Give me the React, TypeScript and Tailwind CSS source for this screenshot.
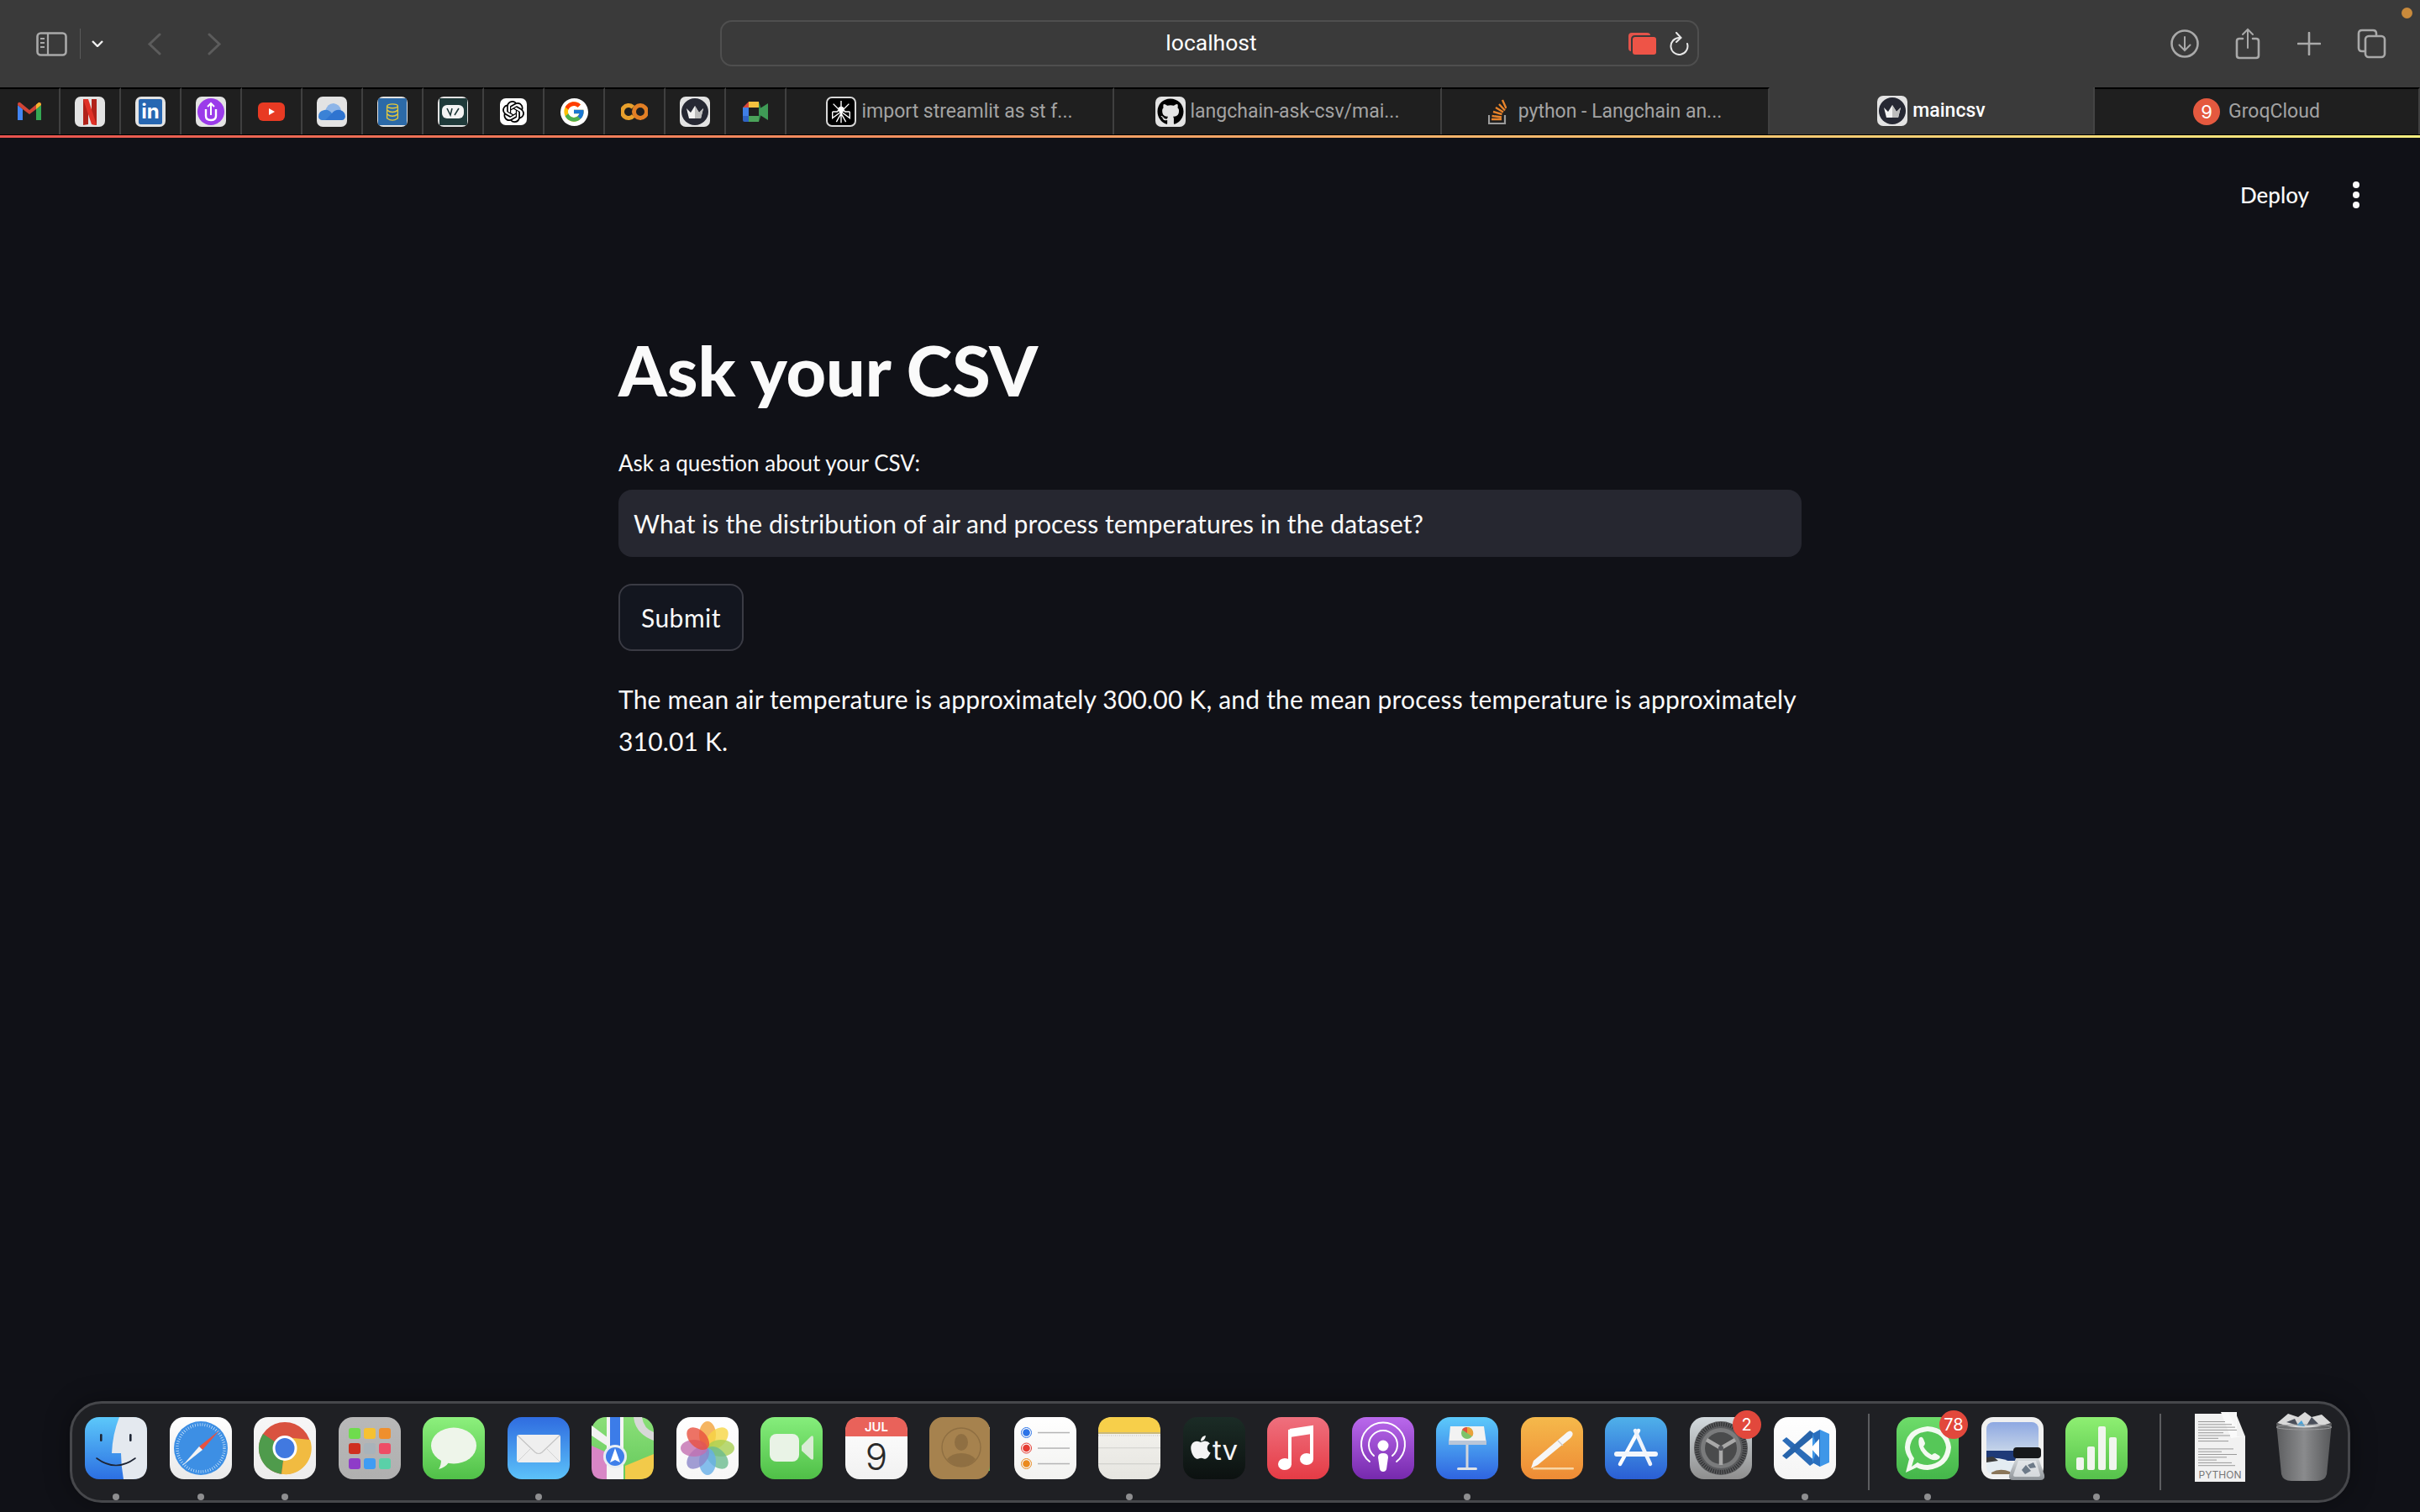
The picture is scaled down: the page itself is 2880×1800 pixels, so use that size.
import type { ReactNode } from 'react';
import { SiOpenai } from 'react-icons/si';
import { FcGoogle } from 'react-icons/fc';
import { FaGithub } from 'react-icons/fa';

const APPLE =
  'M318.7 268.7c-.2-36.7 16.4-64.4 50-84.8-18.8-26.9-47.2-41.7-84.7-44.6-35.5-2.8-74.3 20.7-88.5 20.7-15 0-49.4-19.7-76.4-19.7C63.3 141.2 4 184.8 4 273.5q0 39.3 14.4 81.2c12.8 36.7 59 126.7 107.2 125.2 25.2-.6 43-17.9 75.8-17.9 31.8 0 48.3 17.9 76.4 17.9 48.6-.7 90.4-82.5 102.6-119.3-65.2-30.7-61.7-90-61.7-91.9zm-56.6-164.2c27.3-32.4 24.8-61.9 24-72.5-24.1 1.4-52 16.4-67.9 34.9-17.5 19.8-27.8 44.3-25.6 71.9 26.1 2 49.9-11.4 69.5-34.3z';

// shared tile for the dock icons, 74x74 with a vertical gradient
function Tile({ id, from, to, children }: { id: string; from: string; to: string; children?: ReactNode }) {
  return (
    <svg viewBox="0 0 74 74" className="w-[74px] h-[74px] block">
      <defs>
        <linearGradient id={id} x1="0" y1="0" x2="0" y2="1">
          <stop offset="0" stopColor={from} />
          <stop offset="1" stopColor={to} />
        </linearGradient>
      </defs>
      <rect width="74" height="74" rx="17" fill={`url(#${id})`} />
      {children}
    </svg>
  );
}

const Finder = (
  <Tile id="finder" from="#5cc8fa" to="#2c6fe2">
    <path d="M41 0H57Q74 0 74 17V57Q74 74 57 74H46Q43 58 43 43H32Q33 20 41 0Z" fill="#e4e9ef" />
    <rect x="18" y="20" width="2.6" height="9" rx="1.3" fill="#1d2433" />
    <rect x="53" y="20" width="2.6" height="9" rx="1.3" fill="#1d2433" />
    <path d="M14 49Q37 66 60 49" fill="none" stroke="#1d2433" strokeWidth="1.6" strokeLinecap="round" />
  </Tile>
);

const Safari = (
  <Tile id="safari" from="#ffffff" to="#e9e9e9">
    <circle cx="37" cy="37" r="32" fill="#3d8fe4" />
    <circle cx="37" cy="37" r="28" fill="none" stroke="#d8ebfb" strokeWidth="3.5" strokeDasharray="0.7 2.2" />
    <path d="M35 35L59 16L39 39Z" fill="#e8513f" />
    <path d="M35 35L15 58L39 39Z" fill="#f4f4f4" />
  </Tile>
);

const Chrome = (
  <Tile id="chrome" from="#f7f7f7" to="#ececec">
    <circle cx="37" cy="37" r="31" fill="#d9523f" />
    <path d="M37 37L11 20A31 31 0 0 0 33 67.8Z" fill="#4f9b4c" />
    <path d="M37 37L33 67.8A31 31 0 0 0 67 27L37 24Z" fill="#f1bb41" />
    <ellipse cx="37" cy="37" rx="14.5" ry="15" fill="#fff" />
    <ellipse cx="37" cy="37" rx="11.5" ry="12" fill="#4179e0" />
  </Tile>
);

const padColors = ['#6fdc4d', '#f6c132', '#ef8f2d', '#cf2f1f', '#a9b3ba', '#ee4c66', '#8e3cc8', '#3f9cf3', '#5ad0a8'];
const Launchpad = (
  <Tile id="launch" from="#b8b8b8" to="#b0b0b0">
    {padColors.map((c, i) => (
      <rect key={c} x={12 + (i % 3) * 18} y={13 + Math.floor(i / 3) * 18} width="14" height="13" rx="3" fill={c} />
    ))}
  </Tile>
);

const Messages = (
  <Tile id="msg" from="#8df07d" to="#50c048">
    <ellipse cx="37" cy="34" rx="27" ry="21.5" fill="#eef5ea" />
    <path d="M22 50Q22 58 19 62Q27 60 31 54Z" fill="#eef5ea" />
  </Tile>
);

const Mail = (
  <Tile id="mail" from="#2f6ce0" to="#5cc2f9">
    <rect x="11" y="21" width="52" height="33" rx="3" fill="#efefef" />
    <path d="M12 22L33 42Q37 45 41 42L62 22" fill="none" stroke="#c4c4c4" strokeWidth="1.2" />
    <path d="M12 53L28 37M62 53L46 37" stroke="#d2d2d2" strokeWidth="1" />
  </Tile>
);

const Maps = (
  <Tile id="maps" from="#8adf78" to="#66c95c">
    <path d="M0 34L22 44V74H14Q0 74 0 60Z" fill="#d886c6" />
    <path d="M40 58L74 44V57Q74 74 57 74H40Z" fill="#f2ca4a" />
    <path d="M0 10L24 28V38L0 22Z" fill="#f2f2f2" />
    <rect x="18" y="0" width="20" height="74" fill="#f4f4f4" />
    <rect x="22" y="0" width="12" height="40" fill="#3c7ce8" />
    <path d="M74 28Q52 20 50 0H60Q62 14 74 18Z" fill="#d8d8d8" />
    <circle cx="28" cy="47" r="14" fill="#e9eef3" />
    <circle cx="28" cy="47" r="11" fill="#3f7fea" />
    <path d="M28 37L34 54L28 51L22 54Z" fill="#fff" />
  </Tile>
);

const petals = ['#f2a33a', '#f6d644', '#a8cf52', '#6cbb8f', '#66afe8', '#8b86c9', '#c36fb0', '#e8503f'];
const Photos = (
  <Tile id="photos" from="#ffffff" to="#f6f6f6">
    {petals.map((c, i) => (
      <ellipse key={c} cx="37" cy="21" rx="10" ry="16" fill={c} opacity="0.8" transform={`rotate(${i * 45} 37 37)`} />
    ))}
  </Tile>
);

const FaceTime = (
  <Tile id="facetime" from="#86ee7c" to="#4fbf47">
    <rect x="11" y="20" width="35" height="33" rx="8" fill="#e9f3e6" />
    <path d="M49 34L60 23Q63 21 63 25V49Q63 52 60 50L49 40Z" fill="#d9ecd5" />
  </Tile>
);

const Calendar = (
  <Tile id="cal" from="#ffffff" to="#f1f1f1">
    <path d="M0 23V17Q0 0 17 0H57Q74 0 74 17V23Z" fill="#e9625a" />
    <text x="37" y="17" textAnchor="middle" fontSize="15" fontWeight="600" fill="#fff" className="font-['Inter',sans-serif]">
      JUL
    </text>
    <text x="37" y="63" textAnchor="middle" fontSize="44" fontWeight="300" fill="#2a2a2a" className="font-['Inter',sans-serif]">
      9
    </text>
  </Tile>
);

const Contacts = (
  <svg viewBox="0 0 74 74" className="w-[74px] h-[74px] block">
    <rect x="64" y="12" width="8" height="13" fill="#b8b8b8" />
    <rect x="64" y="25" width="8" height="13" fill="#4ea6e8" />
    <rect x="64" y="38" width="8" height="13" fill="#ea8f2d" />
    <rect x="64" y="51" width="8" height="13" fill="#5cc25a" />
    <rect width="72" height="74" rx="16" fill="#a6824e" />
    <circle cx="38" cy="36" r="23" fill="none" stroke="#8f6f42" strokeWidth="1.4" />
    <ellipse cx="38" cy="30" rx="8" ry="10" fill="#8f6f42" />
    <path d="M21 50Q27 43 38 43Q49 43 55 50Q48 59 38 59Q28 59 21 50Z" fill="#8f6f42" />
  </svg>
);

const Reminders = (
  <Tile id="rem" from="#ffffff" to="#f2f2f0">
    {[
      ['#2c74e8', 18.5],
      ['#e53b32', 37],
      ['#ea8a1f', 55.5],
    ].map(([c, y]) => (
      <g key={c as string}>
        <circle cx="14.5" cy={y as number} r="6" fill="none" stroke={c as string} strokeWidth="1" />
        <circle cx="14.5" cy={y as number} r="4.3" fill={c as string} />
        <rect x="28" y={(y as number) - 0.7} width="38" height="1.5" fill="#b5b5b5" />
      </g>
    ))}
  </Tile>
);

const Notes = (
  <Tile id="notes" from="#f5f4f0" to="#e6e5e0">
    <path d="M0 18V17Q0 0 17 0H57Q74 0 74 17V18Z" fill="#f7cf4a" />
    <rect y="18" width="74" height="2" fill="#c9b878" />
    <line x1="0" y1="22" x2="74" y2="22" stroke="#b3b3b3" strokeWidth="0.8" strokeDasharray="1 1.5" />
    <rect y="36" width="74" height="1.3" fill="#d8d8d4" />
    <rect y="55" width="74" height="1.3" fill="#d2d2ce" />
  </Tile>
);

const AppleTv = (
  <Tile id="tv" from="#1b2c26" to="#0c1110">
    <path d={APPLE} fill="#f4f4f4" transform="translate(9 20) scale(0.062)" />
    <text x="35" y="51" fontSize="33" fontWeight="400" fill="#f4f4f4" className="font-['Inter',sans-serif]">
      tv
    </text>
  </Tile>
);

const Music = (
  <Tile id="music" from="#ef707e" to="#e53b45">
    <path d="M27 16L53 12V50" fill="none" stroke="#fff" strokeWidth="4" />
    <path d="M27 15V57" stroke="#fff" strokeWidth="4" />
    <path d="M27 17L53 13V20L27 24Z" fill="#fff" />
    <ellipse cx="21" cy="56" rx="8" ry="7" fill="#fff" />
    <ellipse cx="47" cy="50" rx="8" ry="7" fill="#fff" />
  </Tile>
);

const Podcasts = (
  <Tile id="pod" from="#ba69ec" to="#7629ad">
    <path d="M21 53A26 26 0 1 1 53 53" fill="none" stroke="#fff" strokeWidth="2" strokeLinecap="round" />
    <path d="M26 46A17 17 0 1 1 48 46" fill="none" stroke="#fff" strokeWidth="2" strokeLinecap="round" />
    <circle cx="37" cy="34" r="6.5" fill="#fff" />
    <path d="M31 48Q31 43 37 43Q43 43 43 48L41 62Q40 65 37 65Q34 65 33 62Z" fill="#fff" />
  </Tile>
);

const Keynote = (
  <Tile id="key" from="#5ccafb" to="#2f64e0">
    <path d="M17 11H57L60 32H15Z" fill="#f2f2f2" />
    <rect x="15" y="28" width="45" height="5" fill="#b9c6d8" />
    <circle cx="37" cy="19" r="7" fill="#7cc36a" />
    <path d="M37 19V12A7 7 0 0 1 43 23Z" fill="#e9a23b" />
    <path d="M37 19V12A7 7 0 0 0 31 15Z" fill="#e3513f" />
    <rect x="35.5" y="33" width="3" height="27" fill="#d2d6dc" />
    <rect x="25" y="60" width="24" height="3" rx="1.5" fill="#dfe2e6" />
  </Tile>
);

const Pages = (
  <Tile id="pages" from="#f5b94b" to="#ee8b35">
    <path d="M12 61L15 52L55 18Q59 15 61 18Q63 21 59 25L20 57Z" fill="#f6f6f6" />
    <path d="M44 28L50 34" stroke="#c9c9c9" strokeWidth="1.2" />
    <rect x="14" y="60" width="49" height="2.5" rx="1" fill="#f7d6a6" />
  </Tile>
);

const AppStore = (
  <Tile id="store" from="#4fb1ea" to="#2a5ed4">
    <path d="M40 16L18 56" stroke="#fff" strokeWidth="4.5" strokeLinecap="round" />
    <path d="M36 16L54 56" stroke="#eef3fb" strokeWidth="4.5" strokeLinecap="round" />
    <rect x="11" y="41" width="52" height="6" rx="3" fill="#f3f6fb" />
  </Tile>
);

const Settings = (
  <Tile id="settings" from="#d3dade" to="#8e8e8e">
    <circle cx="37" cy="37" r="32" fill="#5a5b5d" />
    <circle cx="37" cy="37" r="28.5" fill="none" stroke="#2f3032" strokeWidth="5" strokeDasharray="1.2 1.6" />
    <circle cx="37" cy="37" r="24" fill="#7a7b7c" />
    <circle cx="37" cy="37" r="19" fill="#4a4b4c" />
    <path d="M37 37V57M37 37L20 27M37 37L54 27" stroke="#a8a8a8" strokeWidth="4.5" />
    <circle cx="37" cy="37" r="3" fill="#55565a" />
  </Tile>
);

const VsCode = (
  <Tile id="vscode" from="#ffffff" to="#f4f4f4">
    <path d="M10 28L15 24L50 53L43 58Z" fill="#2b6cb8" />
    <path d="M10 46L15 50L50 21L43 16Z" fill="#2764ab" />
    <path d="M46 20L55 15L66 20V54L55 59L46 54Z" fill="#3f97e8" />
    <path d="M46 54L55 59V15L46 20L52 37Z" fill="#2a6fbe" />
    <path d="M54 26V48L44 37Z" fill="#fff" />
  </Tile>
);

const WhatsApp = (
  <Tile id="wa" from="#6edc6a" to="#44b64a">
    <path d="M11 66L15 50Q10 42 10 36Q11 14 37 11Q62 13 65 36Q63 60 37 63Q29 63 24 60Z" fill="#f3faf1" />
    <path d="M18 59L21 49Q16 42 16 36Q18 19 37 17Q57 19 59 36Q57 55 37 57Q30 57 25 54Z" fill="#56c758" />
    <path d="M27 25Q30 22 32 26L34 31Q34 33 32 35Q35 41 42 45Q44 43 46 43L51 46Q53 48 50 50Q44 54 34 46Q24 36 27 25Z" fill="#f3faf1" />
  </Tile>
);

const Preview = (
  <svg viewBox="0 0 74 74" className="w-[74px] h-[74px] block overflow-visible">
    <defs>
      <linearGradient id="sky" x1="0" y1="0" x2="0" y2="1">
        <stop offset="0" stopColor="#8ea8e2" />
        <stop offset="1" stopColor="#c5d4e9" />
      </linearGradient>
      <linearGradient id="jar" x1="0" y1="0" x2="0" y2="1">
        <stop offset="0" stopColor="#d6dadd" />
        <stop offset="1" stopColor="#8e9398" />
      </linearGradient>
    </defs>
    <rect width="74" height="74" rx="14" fill="#f0f0f0" />
    <clipPath id="photo">
      <rect x="6" y="6" width="62" height="62" rx="8" />
    </clipPath>
    <g clipPath="url(#photo)">
      <rect x="6" y="6" width="62" height="34" fill="url(#sky)" />
      <rect x="6" y="40" width="62" height="12" fill="#1f3a78" />
      <path d="M6 50Q22 46 40 56L46 68H6Z" fill="#e4ecf2" />
      <path d="M6 48L14 47L20 52L6 54Z" fill="#3b3a3a" />
      <path d="M12 66Q22 60 34 65L36 68H12Z" fill="#8a7558" />
    </g>
    <path d="M41 49L33 69Q32 75 38 75H70Q76 75 75 69L68 49Z" fill="url(#jar)" />
    <path d="M44 52L38 69Q38 71 40 71H68Q70 71 70 69L65 52Z" fill="#e9ecef" opacity="0.75" />
    <path d="M48 63L53 57L59 64L52 68ZM55 57L62 54L65 60L58 61Z" fill="#6d7a88" />
    <rect x="38" y="36" width="33" height="13" rx="4" fill="#17181a" />
  </svg>
);

const Numbers = (
  <Tile id="num" from="#8eef72" to="#55c14b">
    {[
      [13, 48],
      [26, 35],
      [39, 11],
      [52, 24],
    ].map(([x, y]) => (
      <rect key={x} x={x} y={y} width="9" height={63 - y} rx="2" fill="#f0f5ee" />
    ))}
  </Tile>
);

const pyLines = [32, 40, 44, 46, 30, 38, 24, 36, 42, 28, 46, 34, 22, 40, 44];
const PythonDoc = (
  <svg viewBox="0 0 74 84" className="w-[74px] h-[84px] block -mt-[7px]">
    <path d="M7 3H56L67 30V86H7Z" fill="#f1f1f1" />
    <path d="M38 1H57V30H66L50 32Z" fill="#fafafa" />
    <path d="M46 1L56 1L56 18Z" fill="#f6f6f6" />
    {pyLines.map((w, i) => (
      <rect key={i} x="11" y={12 + i * 3.3 + (i > 7 ? 6 : 0)} width={w} height="1" fill="#9a9a9a" />
    ))}
    <text x="37" y="80" textAnchor="middle" fontSize="12" fill="#777" className="font-['Inter',sans-serif]">
      PYTHON
    </text>
  </svg>
);

const Trash = (
  <svg viewBox="0 0 74 84" className="w-[74px] h-[84px] block -mt-[8px]">
    <defs>
      <linearGradient id="bin" x1="0" y1="0" x2="1" y2="0">
        <stop offset="0" stopColor="#5d5e60" />
        <stop offset="0.5" stopColor="#8a8b8d" />
        <stop offset="1" stopColor="#57585a" />
      </linearGradient>
    </defs>
    <path d="M4 15Q37 24 70 15L64 76Q62 84 52 84H22Q12 84 10 76Z" fill="url(#bin)" />
    <path d="M5 15L18 4L30 8L38 2L46 8L58 5L69 15Q37 26 5 15Z" fill="#d9d9d9" />
    <path d="M16 14L26 10L30 18ZM40 18L46 8L54 16Z" fill="#4a4f5a" />
    <path d="M28 18L34 12L38 19Z" fill="#4aa3d8" />
    <ellipse cx="37" cy="20" rx="33" ry="3" fill="none" stroke="#9a9b9d" strokeWidth="1" />
  </svg>
);

type DockApp = { name: string; icon: ReactNode; dot?: boolean; badge?: string };

const mainApps: DockApp[] = [
  { name: 'Finder', icon: Finder, dot: true },
  { name: 'Safari', icon: Safari, dot: true },
  { name: 'Chrome', icon: Chrome, dot: true },
  { name: 'Launchpad', icon: Launchpad },
  { name: 'Messages', icon: Messages },
  { name: 'Mail', icon: Mail, dot: true },
  { name: 'Maps', icon: Maps },
  { name: 'Photos', icon: Photos },
  { name: 'FaceTime', icon: FaceTime },
  { name: 'Calendar', icon: Calendar },
  { name: 'Contacts', icon: Contacts },
  { name: 'Reminders', icon: Reminders },
  { name: 'Notes', icon: Notes, dot: true },
  { name: 'TV', icon: AppleTv },
  { name: 'Music', icon: Music },
  { name: 'Podcasts', icon: Podcasts },
  { name: 'Keynote', icon: Keynote, dot: true },
  { name: 'Pages', icon: Pages },
  { name: 'App Store', icon: AppStore },
  { name: 'Settings', icon: Settings, badge: '2' },
  { name: 'VS Code', icon: VsCode, dot: true },
];

const recentApps: DockApp[] = [
  { name: 'WhatsApp', icon: WhatsApp, dot: true, badge: '78' },
  { name: 'Preview', icon: Preview },
  { name: 'Numbers', icon: Numbers, dot: true },
];

function DockItem({ app }: { app: DockApp }) {
  return (
    <div className="relative w-[74px] h-full pt-[16px] shrink-0">
      <div className="h-[74px] flex items-start">{app.icon}</div>
      {app.dot && <div className="mx-auto mt-[17px] w-[8px] h-[8px] rounded-full bg-[#8e8e90]" />}
      {app.badge && (
        <div className="absolute right-[-11px] top-[8px] w-[34px] h-[34px] rounded-full bg-[#e2483c] text-white text-[20px] font-['Inter',sans-serif] flex items-center justify-center">
          {app.badge}
        </div>
      )}
    </div>
  );
}

function DockDivider({ className }: { className: string }) {
  return <div className={`w-[2px] h-[91px] bg-[#5c5d60] shrink-0 ${className}`} />;
}

function Dock() {
  return (
    <div className="absolute left-[83px] bottom-[11px] w-[2714px] h-[121px] rounded-[38px] border-[3px] border-[#46474b] bg-[#1f2024] pl-[15px] flex items-center gap-[26.5px] shadow-[0_0_30px_rgba(0,0,0,0.35)]">
      {mainApps.map((a) => (
        <DockItem key={a.name} app={a} />
      ))}
      <DockDivider className="ml-[11.5px] mr-[5.5px]" />
      {recentApps.map((a) => (
        <DockItem key={a.name} app={a} />
      ))}
      <DockDivider className="ml-[11px] mr-[6.5px]" />
      <DockItem app={{ name: 'python', icon: PythonDoc }} />
      <DockItem app={{ name: 'Trash', icon: Trash }} />
    </div>
  );
}

function FavTile({ children, className = 'bg-[#e3e3e3]' }: { children?: ReactNode; className?: string }) {
  return (
    <div className={`w-[36px] h-[36px] rounded-[7px] flex items-center justify-center overflow-hidden shrink-0 ${className}`}>
      {children}
    </div>
  );
}

const Crown = (
  <FavTile>
    <svg viewBox="0 0 36 36" className="w-[36px] h-[36px]">
      <circle cx="18" cy="18" r="16" fill="#262833" />
      <path d="M8 14L13 19L18 11L23 19L28 14L25 26H11Z" fill="#f2f2f2" />
      <path d="M18 11L23 19L28 14L25 26H18Z" fill="#bdbdbd" />
    </svg>
  </FavTile>
);

const favicons: { name: string; icon: ReactNode }[] = [
  {
    name: 'gmail',
    icon: (
      <svg viewBox="0 0 30 24" className="w-[30px] h-[24px]">
        <path d="M1 4V22H7V9Z" fill="#4285f4" />
        <path d="M23 9V22H29V4Z" fill="#34a853" />
        <path d="M1 4Q1 0 4 1L15 10L26 1Q29 0 29 4L23 9L15 15L7 9Z" fill="#d14436" />
        <path d="M23 9L29 4Q29 1 26 1L23 3.5Z" fill="#f1b62e" />
      </svg>
    ),
  },
  {
    name: 'netflix',
    icon: (
      <FavTile>
        <svg viewBox="0 0 36 36" className="w-[36px] h-[36px]">
          <path d="M10 3H16V33L10 34Z" fill="#b1221a" />
          <path d="M20 3H26V34L20 33Z" fill="#b1221a" />
          <path d="M10 3H16L26 34L20 33Z" fill="#e03127" />
        </svg>
      </FavTile>
    ),
  },
  {
    name: 'linkedin',
    icon: (
      <FavTile>
        <div className="w-[28px] h-[30px] rounded-[2px] bg-[#2867b2] flex items-center justify-center text-white text-[24px] font-bold leading-none font-['Inter',sans-serif]">
          in
        </div>
      </FavTile>
    ),
  },
  {
    name: 'udemy',
    icon: (
      <FavTile>
        <svg viewBox="0 0 36 36" className="w-[36px] h-[36px]">
          <circle cx="18" cy="18" r="16" fill="#9b3bea" />
          <path d="M12 15V23Q12 28 18 28Q24 28 24 23V15" fill="none" stroke="#fff" strokeWidth="2.4" />
          <path d="M14 12L18 8L22 12" fill="none" stroke="#fff" strokeWidth="2" />
          <path d="M18 9V22" stroke="#fff" strokeWidth="2" />
        </svg>
      </FavTile>
    ),
  },
  {
    name: 'youtube',
    icon: (
      <div className="w-[32px] h-[22px] rounded-[6px] bg-[#e83a23] flex items-center justify-center">
        <svg viewBox="0 0 10 10" className="w-[10px] h-[10px]">
          <path d="M2 1L9 5L2 9Z" fill="#fff" />
        </svg>
      </div>
    ),
  },
  {
    name: 'onedrive',
    icon: (
      <FavTile>
        <svg viewBox="0 0 36 36" className="w-[36px] h-[36px]">
          <path d="M10 18Q12 8 20 8Q27 9 29 16L20 24Z" fill="#8db5e8" />
          <path d="M2 24Q2 17 9 16Q14 15 18 20L24 28H6Q2 27 2 24Z" fill="#3b82d6" />
          <path d="M18 20Q22 15 28 16Q34 18 34 24Q33 28 30 28H10Z" fill="#2f74d0" />
        </svg>
      </FavTile>
    ),
  },
  {
    name: 'database',
    icon: (
      <FavTile>
        <div className="w-[34px] h-[32px] bg-[#2c6aa8] flex items-center justify-center">
          <svg viewBox="0 0 20 26" className="w-[16px] h-[21px]" fill="none" stroke="#e6c93a" strokeWidth="1.7">
            <ellipse cx="10" cy="4" rx="8" ry="3" />
            <path d="M2 4V22Q10 28 18 22V4M2 10Q10 16 18 10M2 16Q10 22 18 16" />
          </svg>
        </div>
      </FavTile>
    ),
  },
  {
    name: 'v0',
    icon: (
      <FavTile>
        <div className="w-[33px] h-[32px] bg-[#1f3a3a] flex items-center justify-center">
          <svg viewBox="0 0 26 16" className="w-[26px] h-[16px]">
            <rect width="26" height="16" rx="6" fill="#f4f4f4" />
            <path d="M6 4L10 12L12 4M15 12L20 4" fill="none" stroke="#1f3a3a" strokeWidth="1.6" />
          </svg>
        </div>
      </FavTile>
    ),
  },
  {
    name: 'openai',
    icon: (
      <FavTile className="bg-white !h-[32px] !w-[32px]">
        <SiOpenai className="w-[26px] h-[26px] text-black" />
      </FavTile>
    ),
  },
  {
    name: 'google',
    icon: (
      <div className="w-[33px] h-[33px] rounded-full bg-white flex items-center justify-center">
        <FcGoogle className="w-[28px] h-[28px]" />
      </div>
    ),
  },
  {
    name: 'colab',
    icon: (
      <svg viewBox="0 0 32 22" className="w-[32px] h-[22px]" fill="none" strokeWidth="5">
        <circle cx="9" cy="11" r="7.5" stroke="#e8a02c" strokeDasharray="36 11" transform="rotate(40 9 11)" />
        <circle cx="23" cy="11" r="7.5" stroke="#e27f25" />
      </svg>
    ),
  },
  { name: 'streamlit', icon: Crown },
  {
    name: 'meet',
    icon: (
      <svg viewBox="0 0 30 24" className="w-[30px] h-[24px]">
        <path d="M7 0H19V7H7Z" fill="#f4c23f" />
        <path d="M0 7L7 0V7Z" fill="#d8453a" />
        <rect y="7" width="7" height="10" fill="#3f7fe6" />
        <path d="M0 17H7V24H2Q0 24 0 22Z" fill="#2e63c4" />
        <path d="M7 17H19V24H7Z" fill="#4ba35a" />
        <path d="M19 0V24L23 12Z" fill="#2f8a4a" />
        <path d="M19 9L30 2V22L19 15Z" fill="#3f9a56" />
      </svg>
    ),
  },
];

function WideTab({ icon, label, active, className }: { icon: ReactNode; label: string; active?: boolean; className: string }) {
  return (
    <div
      className={`${className} h-[56px] flex items-center justify-center gap-[6px] ${
        active ? 'bg-[#3a3a3a] border-r-2 border-[#444]' : 'border-t-2 border-black border-r-2 border-r-[#404040]'
      }`}
    >
      {icon}
      <span className={`text-[23px] whitespace-nowrap font-['Roboto',sans-serif] ${active ? 'text-white font-medium' : 'text-[#a3a3a3]'}`}>
        {label}
      </span>
    </div>
  );
}

function TabStrip() {
  return (
    <div className="flex h-[56px] bg-[#1f1f1f]">
      {favicons.map((f) => (
        <div key={f.name} className="w-[72px] h-[56px] shrink-0 flex items-center justify-center border-t-2 border-black border-r-2 border-r-[#404040]">
          {f.icon}
        </div>
      ))}
      <WideTab
        className="w-[390px]"
        label="import streamlit as st f..."
        icon={
          <FavTile className="bg-black border-2 border-[#d8d8d8]">
            <svg viewBox="0 0 32 32" className="w-[30px] h-[30px]" fill="none" stroke="#fff" strokeWidth="1.5">
              <path d="M16 2V30M6 6L16 16L26 6M5 16H11L16 10L21 16H27M5 16V24L16 16L27 24V16M10 29L16 18L22 29" />
              <circle cx="16" cy="13" r="3" fill="#fff" />
            </svg>
          </FavTile>
        }
      />
      <WideTab
        className="w-[390px]"
        label="langchain-ask-csv/mai..."
        icon={
          <FavTile>
            <FaGithub className="w-[32px] h-[32px] text-black" />
          </FavTile>
        }
      />
      <WideTab
        className="w-[390px]"
        label="python - Langchain an..."
        icon={
          <svg viewBox="0 0 22 30" className="w-[22px] h-[30px] mr-[8px]">
            <path d="M1 19V29H20V19" fill="none" stroke="#9b9b9b" strokeWidth="2.2" />
            <path d="M4 24H16M4.5 20L16 21.5M6 15L16.5 18M9 10L18 15.5M13 6L20 13.5M17 1L21.5 11" stroke="#e8832a" strokeWidth="2.4" />
          </svg>
        }
      />
      <WideTab className="w-[387px]" active label="maincsv" icon={Crown} />
      <WideTab
        className="flex-1"
        label="GroqCloud"
        icon={
          <div className="w-[32px] h-[32px] mr-[4px] rounded-full bg-[#e4593f] text-white text-[22px] font-['Inter',sans-serif] flex items-center justify-center">
            9
          </div>
        }
      />
    </div>
  );
}

function Toolbar() {
  return (
    <div className="relative h-[104px] bg-[#3a3a3a] grid grid-cols-[857px_1165px_1fr] items-center">
      <div className="flex items-center pl-[43px]">
        <svg viewBox="0 0 37 29" className="w-[37px] h-[29px]" fill="none" stroke="#a9a9a9">
          <rect x="1.5" y="1.5" width="34" height="26" rx="4" strokeWidth="2.6" />
          <path d="M14 2V27" strokeWidth="2.2" />
          <path d="M5 8H10M5 13H10M5 18H10" strokeWidth="2" />
        </svg>
        <div className="ml-[15px] w-px h-[36px] bg-[#5a5a5a]" />
        <svg viewBox="0 0 14 8" className="ml-[13px] w-[14px] h-[8px]" fill="none" stroke="#f0f0f0" strokeWidth="2.4">
          <path d="M1 1L7 7L13 1" />
        </svg>
        <svg viewBox="0 0 17 27" className="ml-[52px] w-[17px] h-[27px]" fill="none" stroke="#5c5c5c" strokeWidth="3" strokeLinecap="round">
          <path d="M15 2L3 13.5L15 25" />
        </svg>
        <svg viewBox="0 0 17 27" className="ml-[55px] w-[17px] h-[27px]" fill="none" stroke="#5c5c5c" strokeWidth="3" strokeLinecap="round">
          <path d="M2 2L14 13.5L2 25" />
        </svg>
      </div>

      <div className="h-[55px] -mt-[1px] rounded-[14px] border-2 border-[#4f4f4f] flex items-center pl-[86px] pr-[10px]">
        <span className="flex-1 text-center text-[26.5px] leading-none text-white font-['Roboto',sans-serif]">localhost</span>
        <div className="w-[72px] flex items-center justify-between">
          <svg viewBox="0 0 33 26" className="w-[33px] h-[26px]">
            <path d="M0 4Q0 0 4 0H22Q26 0 26 3H8Q3 3 3 8V22Q0 22 0 18Z" fill="#e4534a" />
            <rect x="5" y="5" width="28" height="21" rx="3" fill="#ee5447" />
          </svg>
          <svg viewBox="0 0 23 28" className="w-[23px] h-[28px]" fill="none" stroke="#e8e8e8" strokeWidth="2" strokeLinecap="round">
            <path d="M11.5 7A10 10 0 1 0 21 14" />
            <path d="M8 1L13.5 7L8 12" />
          </svg>
        </div>
      </div>

      <div className="flex items-center justify-end gap-[43.5px] pr-[39px] -translate-x-[1px]">
        <svg viewBox="0 0 34 34" className="w-[34px] h-[34px]" fill="none" stroke="#a9a9a9" strokeWidth="2.6" strokeLinecap="round">
          <circle cx="17" cy="17" r="15.5" />
          <path d="M17 9V25M10.5 18.5L17 25L23.5 18.5" strokeWidth="2" />
        </svg>
        <svg viewBox="0 0 30 38" className="w-[30px] h-[38px]" fill="none" stroke="#a9a9a9" strokeWidth="2.6" strokeLinecap="round">
          <path d="M9 13H5Q2 13 2 16V33Q2 36 5 36H25Q28 36 28 33V16Q28 13 25 13H21" />
          <path d="M15 24V2M9 8L15 2L21 8" strokeWidth="2" />
        </svg>
        <svg viewBox="0 0 28 28" className="w-[28px] h-[28px]" fill="none" stroke="#a9a9a9" strokeWidth="2.6" strokeLinecap="round">
          <path d="M14 1V27M1 14H27" />
        </svg>
        <svg viewBox="0 0 35 36" className="w-[35px] h-[36px]" fill="none" stroke="#a9a9a9" strokeWidth="2.6">
          <rect x="10" y="9" width="23" height="25" rx="4" />
          <path d="M10 27H6Q2 27 2 23V6Q2 2 6 2H19Q23 2 23 6V9" />
        </svg>
      </div>

      <div className="absolute right-[9px] top-[9px] w-[13px] h-[13px] rounded-full bg-[#c98a3b]" />
    </div>
  );
}

export default function App() {
  return (
    <div className="relative w-[2880px] h-[1800px] overflow-hidden bg-[#101117] text-[#fafafa] font-['Lato',sans-serif]">
      <Toolbar />
      <TabStrip />
      <div className="h-[1px] bg-black" />
      <div className="h-[3px] bg-gradient-to-r from-[#e8524e] to-[#f7ef80]" />

      <header className="h-[136px] flex items-center justify-end pr-[72px] gap-[52px]">
        <span className="text-[26px] font-medium">Deploy</span>
        <svg viewBox="0 0 8 32" className="w-[8px] h-[32px]" fill="#fafafa">
          <circle cx="4" cy="4" r="4" />
          <circle cx="4" cy="16" r="4" />
          <circle cx="4" cy="28" r="4" />
        </svg>
      </header>

      <main className="w-[1408px] mx-auto pt-[86px]">
        <h1 className="text-[82.5px] leading-[110px] font-black">Ask your CSV</h1>
        <label className="block mt-[35px] text-[26px] leading-[40px]">Ask a question about your CSV:</label>
        <div className="mt-[12px] h-[80px] rounded-[16px] bg-[#262730] flex items-center px-[18px] text-[30px] tracking-[0.1px]">
          What is the distribution of air and process temperatures in the dataset?
        </div>
        <button className="block mt-[32px] w-[149px] h-[80px] rounded-[16px] border-2 border-[#3a3b44] bg-[#13161f] text-[30px] tracking-[0.5px]">
          Submit
        </button>
        <p className="mt-[32px] text-[30px] leading-[50px] tracking-[0.18px]">
          The mean air temperature is approximately 300.00 K, and the mean process temperature is approximately 310.01 K.
        </p>
      </main>

      <Dock />
    </div>
  );
}
